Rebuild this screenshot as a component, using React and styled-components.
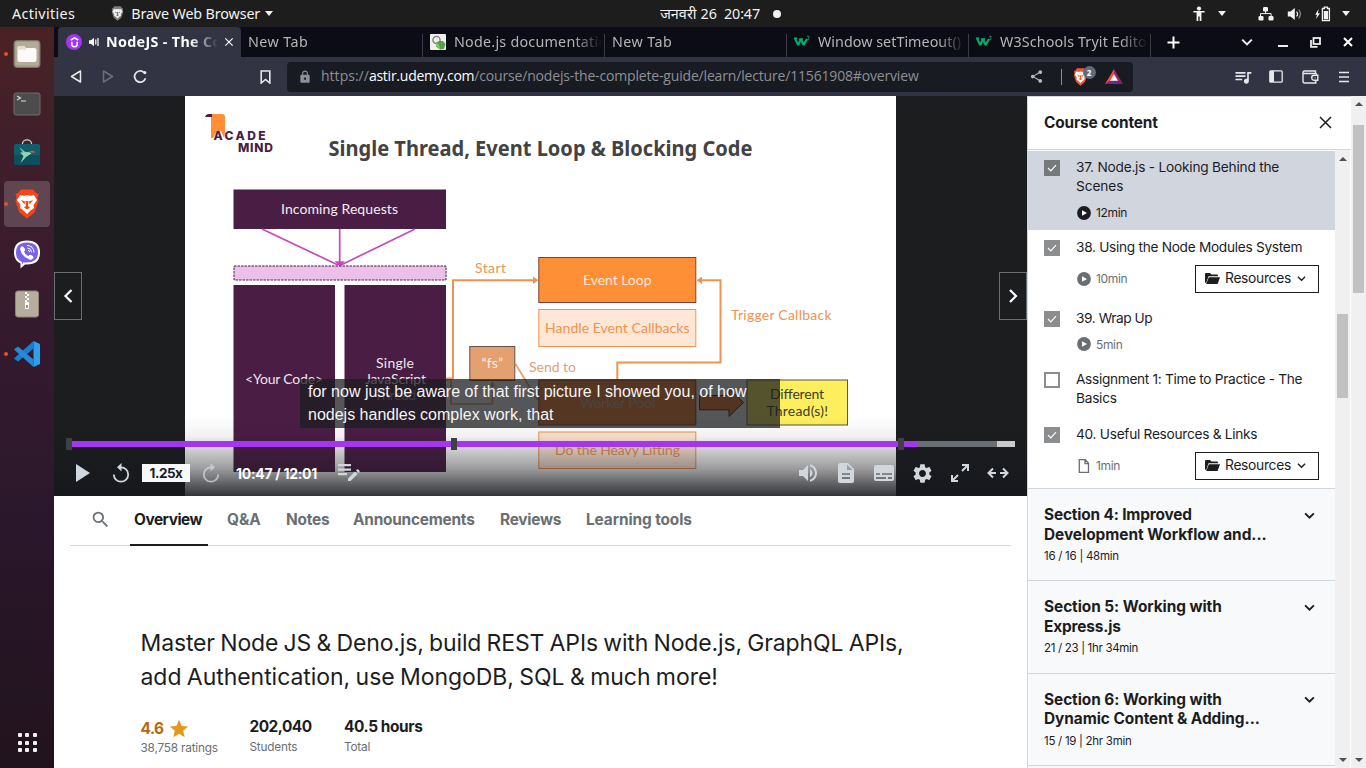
import React from 'react';
import styled, { createGlobalStyle, css } from 'styled-components';
import {
  MdVolumeUp, MdDescription, MdSubtitles, MdSettings, MdSearch, MdStar,
  MdQueueMusic, MdShare, MdLock, MdClose,
} from 'react-icons/md';

const UI = '"Noto Sans", "Open Sans", sans-serif';
const COURSE = 'Inter, "Liberation Sans", sans-serif';

const GlobalStyle = createGlobalStyle`
  * { box-sizing: border-box; }
  body { margin: 0; overflow: hidden; font-family: ${COURSE}; color: #1c1d1f; }
  svg { display: block; flex: none; }
`;

/* ---------- shared ---------- */

const Screen = styled.div`
  width: 1366px;
  height: 768px;
  display: flex;
  flex-direction: column;
  background: #fff;
`;

const Text = styled.span`
  display: block;
  white-space: pre;
  letter-spacing: ${(p) => p.$ls || 0}px;
  ${(p) => p.$left && css`margin-left: ${p.$left}px;`}
  ${(p) => p.$color && css`color: ${p.$color};`}
`;

const Slot = styled.span`
  flex: none;
  width: ${(p) => p.$w}px;
  display: flex;
  align-items: center;
  justify-content: center;
  ${(p) => p.$left && css`margin-left: ${p.$left}px;`}
  ${(p) => p.$color && css`color: ${p.$color};`}
`;

const Caret = styled.i`
  flex: none;
  border: 4.5px solid transparent;
  border-top: 5px solid #f2f2f2;
  border-bottom: 0;
  margin-left: ${(p) => p.$left}px;
`;

const Chevron = ({ size = 10, width = 2 }) => (
  <svg width={size} height={size} viewBox="0 0 10 10" fill="none" stroke="currentColor" strokeWidth={width}>
    <path d="M1 3l4 4 4-4" />
  </svg>
);

const Lion = ({ w, h, shield, face }) => (
  <svg width={w} height={h} viewBox="2 0 26 30" preserveAspectRatio="none">
    <path d="M9 .5h12l3 3.500 2.500 1-1 4 1 3-4 11.500-7.500 6-7.500-6-4-11.500 1-3-1-4L6 4z" fill={shield} />
    <path d="M8 6l4 .7L15 6l3 .7L22 6l3 5-3.500 5 .5 3-3.500 2.500L15 25l-3.500-3.500L8 19l.5-3L5 11z" fill={face} />
    <path d="M9 11l4 1.500-.5 3zM21 11l-4 1.500.5 3zM13.500 12h3l-.5 5 2 1.500-3 2-3-2 2-1.500z" fill={shield} />
  </svg>
);

/* ---------- system bar ---------- */

const SystemBar = styled.header`
  flex: none;
  height: 27px;
  background: #1d1d1d;
  color: #f2f2f2;
  display: flex;
  align-items: center;
  font: 14.3px/27px ${UI};
`;

const ClockDot = styled.i`
  width: 8px;
  height: 8px;
  border-radius: 50%;
  background: #f2f2f2;
  margin-left: 13px;
`;

function TopBar() {
  return (
    <SystemBar>
      <Text $left={12} $ls={0.37}>Activities</Text>
      <Slot $w={14} $left={35}><Lion w={13} h={15} shield="#7d7d7d" face="#f4f4f4" /></Slot>
      <Text $left={7} $ls={-0.12}>Brave Web Browser</Text>
      <Caret $left={5} />
      <Text $left={387} $ls={0.1}>जनवरी 26</Text>
      <Text $left={7} $ls={-0.09}>20:47</Text>
      <ClockDot />
      <Slot $w={14} $left={411}>
        <svg width="14" height="16" viewBox="0 0 14 16" fill="currentColor">
          <circle cx="7" cy="2.6" r="2.1" />
          <path d="M1.4 5h11.2v1.6H9.4V15H7.7v-4.6H6.3V15H4.6V6.6H1.4z" />
        </svg>
      </Slot>
      <Caret $left={12} />
      <Slot $w={16} $left={32}>
        <svg width="16" height="14" viewBox="0 0 16 14" fill="currentColor">
          <rect x="5" y="0" width="5" height="4.4" rx="1.2" />
          <rect x="0.5" y="9" width="5" height="4.4" rx="1.2" />
          <rect x="10.5" y="9" width="5" height="4.4" rx="1.2" />
          <path d="M2.5 9.5V6.6h10.6v2.9M7.6 4v3" fill="none" stroke="currentColor" />
        </svg>
      </Slot>
      <Slot $w={16} $left={13}>
        <svg width="16" height="14" viewBox="0 0 16 14" fill="currentColor">
          <path d="M0.8 4.6h2.7L7.8 1v12L3.5 9.4H0.8z" />
          <path d="M9.6 4.5q2 2.5 0 5" fill="none" stroke="currentColor" strokeWidth="1.2" />
          <path d="M11.6 2.5q3.6 4.5 0 9" fill="none" stroke="#8d8d8d" strokeWidth="1.2" />
        </svg>
      </Slot>
      <Slot $w={16} $left={12}>
        <svg width="16" height="16" viewBox="0 0 16 16" fill="currentColor">
          <path d="M3.6 3L.2 8.800h1.800L1 13l4-5.800H3z" />
          <path d="M7.4 2.5h2V1.2h3v1.3h2v12.2h-7z" fill="none" stroke="currentColor" strokeWidth="1.3" />
          <rect x="8.8" y="5" width="4.2" height="8.4" />
        </svg>
      </Slot>
      <Caret $left={11} />
    </SystemBar>
  );
}

/* ---------- dock ---------- */

const Body = styled.div`
  flex: 1;
  min-height: 0;
  display: flex;
`;

const Dock = styled.nav`
  width: 54px;
  flex: none;
  display: flex;
  flex-direction: column;
  padding: 4px 4px 11px;
  background: linear-gradient(180deg, #4a2224 0%, #42202a 12%, #351a2e 40%, #2a172b 68%, #21131d 100%);
`;

const DockItem = styled.div`
  height: 46px;
  margin-bottom: 4px;
  border-radius: 4px;
  display: flex;
  align-items: center;
  background: ${(p) => (p.$active ? 'rgba(255,255,255,.18)' : 'none')};
  &::before {
    content: '';
    width: 4px;
    height: 4px;
    border-radius: 50%;
    background: ${(p) => (p.$running ? '#e95420' : 'transparent')};
  }
  & > svg { margin-left: 4px; }
`;

const AppsButton = styled.div`
  margin: auto 0 0 13.500px;
  display: grid;
  grid-template-columns: repeat(3, 4px);
  gap: 3.5px;
  padding-bottom: 5px;
  i { height: 4px; border-radius: 1px; background: #f2f2f2; }
`;

function Launcher() {
  return (
    <Dock>
      <DockItem $running>
        <svg width="30" height="30" viewBox="0 0 30 30">
          <rect x="2" y="1.5" width="26" height="27" rx="3" fill="#a19886" stroke="#7c7566" />
          <rect x="3.5" y="3" width="23" height="23.5" rx="2" fill="#b4ab99" />
          <path d="M5.5 9q0-2 2-2H12l2 2h8.5q2 0 2 2v10q0 2-2 2h-15q-2 0-2-2z" fill="#fbfaf8" />
          <path d="M5.5 9q0-2 2-2H12l2 2v1.5H5.5z" fill="#e3ded4" />
        </svg>
      </DockItem>
      <DockItem>
        <svg width="30" height="30" viewBox="0 0 30 30">
          <rect x="2" y="4" width="26" height="22" rx="2" fill="#4c4c4c" stroke="#6d6d6d" />
          <path d="M5 7l3.5 2L5 11M9 12h5" stroke="#ddd" strokeWidth="1.2" fill="none" />
        </svg>
      </DockItem>
      <DockItem>
        <svg width="30" height="30" viewBox="0 0 30 30">
          <path d="M10.500 6V4.700a4.500 3.800 0 019 0V6" fill="none" stroke="#cfcfcf" strokeWidth="1.300" />
          <rect x="2" y="5" width="26" height="21" rx="2" fill="#125d6c" />
          <path d="M2 16h26v8q0 2-2 2H4q-2 0-2-2z" fill="#0d4f5d" />
          <path d="M7 8l9.500 7.500-3 1.500z" fill="#7fd0a6" />
          <path d="M8 13.500l9-.5 2.500 1.500L14 18l-5.500 6 3-7z" fill="#8fd6b2" />
          <path d="M17 12.500l3-.800q2.500-.3 3 2l-4-.2z" fill="#e2572e" />
        </svg>
      </DockItem>
      <DockItem $active $running>
        <Slot $w={30} $left={4}><Lion w={26} h={30} shield="#fb4316" face="#fff" /></Slot>
      </DockItem>
      <DockItem>
        <svg width="30" height="30" viewBox="0 0 30 30">
          <path d="M15 1.500q13 0 13 12t-13 12q-1 0-2 0L8.500 29.500V24.500Q2 21.500 2 13.500q0-12 13-12z" fill="#fff" />
          <path d="M15 3.500q11 0 11 10t-11 10q-2 0-3.500-.3L10 25.500V23Q4 20.500 4 13.500q0-10 11-10z" fill="#7a62e6" />
          <path d="M9.500 7.500q1.500-.8 3.500 2.500.5 1.300-1 2.400 1 3.300 4.300 4.600 1.500-2 3-1 3 1.500 2 3-1.500 2.500-3.800 1.500Q9.500 17.500 8 10q0-1.500 1.500-2.500z" fill="#fff" />
          <path d="M15 6.500q6.500 0 7 7M15.500 9q4 .2 4 4.300M16 11.300q1.500 0 1.600 1.800" fill="none" stroke="#fff" />
        </svg>
      </DockItem>
      <DockItem>
        <svg width="30" height="30" viewBox="0 0 30 30">
          <rect x="3.500" y="2" width="23" height="26" rx="2.500" fill="#b6ad9c" stroke="#8f8879" />
          <path d="M13 3h2v2h-2zM15 5h2v2h-2zM13 7h2v2h-2zM15 9h2v2h-2zM13 11h2v2h-2z" fill="#fff" />
          <rect x="13" y="13" width="4" height="7" rx="1" fill="#fff" />
          <rect x="14" y="16" width="2" height="3" fill="#9d9484" />
        </svg>
      </DockItem>
      <DockItem $running>
        <svg width="30" height="30" viewBox="0 0 30 30">
          <path d="M21.500 2L28 5v20l-6.500 3z" fill="#2f9ff0" />
          <path d="M21.500 2v7.500L6 22.500 2 19.500z" fill="#1b7fd0" />
          <path d="M2 10.500l4-3 15.500 13V28z" fill="#2489db" />
        </svg>
      </DockItem>
      <AppsButton>{Array.from({ length: 9 }, (_, i) => <i key={i} />)}</AppsButton>
    </Dock>
  );
}

/* ---------- browser chrome ---------- */

const Browser = styled.div`
  flex: 1;
  min-width: 0;
  display: flex;
  flex-direction: column;
`;

const TabStrip = styled.div`
  height: 30px;
  flex: none;
  padding-left: 4px;
  background: #0c0c16;
  display: flex;
  align-items: center;
  color: #f0f0f2;
`;

const BrowserTab = styled.div`
  width: ${(p) => (p.$active ? 183 : 182)}px;
  height: 30px;
  flex: none;
  display: flex;
  align-items: center;
  padding-left: ${(p) => (p.$active ? 8 : 7)}px;
  font: ${(p) => (p.$active ? 700 : 400)} 14.3px/30px ${UI};
  color: ${(p) => (p.$active ? '#fff' : '#b4b4b8')};
  background: ${(p) => (p.$active ? '#323443' : 'linear-gradient(#3b3c44, #3b3c44) right bottom / 1px 23px no-repeat')};
  border-radius: ${(p) => (p.$active ? '4px 4px 0 0' : 0)};
`;

const TabTitle = styled(Text)`
  overflow: hidden;
  width: ${(p) => p.$w}px;
  margin-left: ${(p) => p.$gap || 0}px;
  mask-image: linear-gradient(90deg, #000 ${(p) => p.$w - 28}px, transparent ${(p) => p.$w}px);
`;

const UdemyIcon = styled.span`
  width: 16px;
  height: 16px;
  border-radius: 50%;
  background: #a435f0;
  display: grid;
  place-items: center;
`;

const NodeDocIcon = () => (
  <svg width="16" height="16" viewBox="0 0 16 16">
    <rect width="16" height="16" rx="1" fill="#f0f0ee" />
    <circle cx="6.500" cy="6" r="3.600" fill="none" stroke="#7b7b78" strokeWidth="1.300" />
    <path d="M6 8.500l3-1.500h4l2.500 3-1.500 5-4 .5L6 12.500z" fill="#55a24a" />
    <path d="M6 8.500l3 2 1 5L6 12.500z" fill="#83c276" />
  </svg>
);

const SchoolsIcon = () => (
  <svg width="16" height="16" viewBox="0 0 16 16" fill="none" stroke="#04aa6d">
    <path d="M.8 4l3.400 7L7 5l2.500 6L13 5" strokeWidth="2.200" strokeLinejoin="bevel" />
    <path d="M0 4.200h3.200M5 5h4" strokeWidth="1.400" />
    <path d="M13 2.300h2.300l-1.200 1.500q1.500.3.900 1.500-.7.700-1.800.2" strokeWidth=".8" />
  </svg>
);

const Toolbar = styled.div`
  height: 39px;
  flex: none;
  background: #323443;
  display: flex;
  align-items: center;
  color: #e8e8ea;
`;

const AddressBar = styled.div`
  width: 846px;
  height: 30px;
  margin-left: 16px;
  padding-left: 10px;
  border-radius: 4px;
  background: #181b22;
  display: flex;
  align-items: center;
  color: #8e9095;
  font: 14px/28px "Open Sans", ${UI};
`;

const UrlText = styled(Text)`
  height: 30px;
`;

const BarDivider = styled.i`
  width: 1px;
  height: 16px;
  background: #8e9095;
  margin-left: 17px;
`;

const Shield = styled.span`
  position: relative;
  margin-left: 11px;
  b {
    position: absolute;
    left: 10px;
    top: -2px;
    width: 13px;
    height: 13px;
    border-radius: 50%;
    background: #62697a;
    color: #fff;
    font: 700 8px/13px ${UI};
    text-align: center;
  }
`;

const TABS = [
  { title: 'New Tab', ls: 0.43 },
  { title: 'Node.js documentation', ls: 0.24, icon: <NodeDocIcon /> },
  { title: 'New Tab', ls: 0.43 },
  { title: 'Window setTimeout() M', ls: 0.04, icon: <SchoolsIcon /> },
  { title: 'W3Schools Tryit Editor', ls: 0.14, icon: <SchoolsIcon /> },
];

function Chrome() {
  return (
    <>
      <TabStrip>
        <BrowserTab $active>
          <UdemyIcon>
            <svg width="9" height="11" viewBox="0 0 9 11" fill="none" stroke="#fff" strokeWidth="1.500">
              <path d="M.8 3l3.700-2.200L8.200 3M1.800 4.700V7.200q0 2.500 2.700 2.500t2.700-2.500V4.700" />
            </svg>
          </UdemyIcon>
          <Slot $w={11} $left={7}>
            <svg width="11" height="10" viewBox="0 0 11 10" fill="#fff">
              <path d="M0 3.300h2L5 .8v8.400L2 6.700H0z" /><path d="M6.800 2.500v5M9 1v8" stroke="#fff" strokeWidth="1.200" />
            </svg>
          </Slot>
          <TabTitle $w={112} $gap={6} $ls={0.34}>NodeJS - The Co</TabTitle>
          <Slot $w={10} $left={6}><MdClose size={14} /></Slot>
        </BrowserTab>
        {TABS.map((t, i) => (
          <BrowserTab key={i}>
            {t.icon}
            <TabTitle $w={t.icon ? 148 : 166} $gap={t.icon ? 8 : 0} $ls={t.ls}>{t.title}</TabTitle>
          </BrowserTab>
        ))}
        <Slot $w={14} $left={15}>
          <svg width="13" height="13"><path d="M6.500 .5v12M.5 6.500h12" stroke="#fff" strokeWidth="2" /></svg>
        </Slot>
        <Slot $w={12} $left={61}><Chevron size={12} width={1.700} /></Slot>
        <Slot $w={12} $left={24}>
          <svg width="10" height="12"><path d="M0 10h10" stroke="#eee" strokeWidth="2" /></svg>
        </Slot>
        <Slot $w={12} $left={20}>
          <svg width="11" height="11" fill="none" stroke="#eee" strokeWidth="1.800">
            <rect x="3.500" y="1" width="6.500" height="6" /><path d="M1 3v6.800h6.500" />
          </svg>
        </Slot>
        <Slot $w={12} $left={21}>
          <svg width="10" height="10"><path d="M1 1l8 8M9 1l-8 8" stroke="#fff" strokeWidth="2" /></svg>
        </Slot>
      </TabStrip>
      <Toolbar>
        <Slot $w={14} $left={15}>
          <svg width="12" height="13" fill="none" stroke="#e8e8ea" strokeWidth="1.500" strokeLinejoin="round"><path d="M10.500 1v11L1.500 6.500z" /></svg>
        </Slot>
        <Slot $w={14} $left={18}>
          <svg width="12" height="13" fill="none" stroke="#6c6e7a" strokeWidth="1.500" strokeLinejoin="round"><path d="M1.500 1v11L10.500 6.500z" /></svg>
        </Slot>
        <Slot $w={16} $left={17}>
          <svg width="15" height="15" fill="none" stroke="#e8e8ea" strokeWidth="1.700">
            <path d="M12.500 9.300A5.600 5.600 0 1110.800 3.300" /><circle cx="11.800" cy="3.600" r="1.600" fill="#e8e8ea" stroke="none" />
          </svg>
        </Slot>
        <Slot $w={12} $left={111}>
          <svg width="11" height="14" fill="none" stroke="#e8e8ea" strokeWidth="1.600"><path d="M1.200 1h8.600v12L5.500 9.500 1.200 13z" /></svg>
        </Slot>
        <AddressBar>
          <Slot $w={16}><MdLock size={14} /></Slot>
          <UrlText $left={8} $ls={0.02}>https://</UrlText>
          <UrlText $color="#fff" $ls={-0.25}>astir.udemy.com</UrlText>
          <UrlText $ls={-0.17}>/course/nodejs-the-complete-guide/learn/lecture/11561908#overview</UrlText>
          <Slot $w={14} $left={111} $color="#b9bbc0"><MdShare size={15} /></Slot>
          <BarDivider />
          <Shield>
            <Lion w={15} h={18} shield="#fb542b" face="#fff" />
            <b>2</b>
          </Shield>
          <Slot $w={18} $left={17}>
            <svg width="18" height="15">
              <path d="M9 0L0 15l9-5z" fill="#ff4724" /><path d="M9 0l9 15-9-5z" fill="#9e1f63" /><path d="M0 15l9-5 9 5z" fill="#662d91" />
              <path d="M9 5l4 6.700H5z" fill="#fff" />
            </svg>
          </Slot>
        </AddressBar>
        <Slot $w={18} $left={101}><MdQueueMusic size={20} /></Slot>
        <Slot $w={16} $left={16}>
          <svg width="14" height="13"><rect x=".8" y=".8" width="12.400" height="11.400" rx="1" fill="none" stroke="#e8e8ea" strokeWidth="1.300" /><path d="M1 1h4v11H1z" fill="#e8e8ea" /></svg>
        </Slot>
        <Slot $w={18} $left={17}>
          <svg width="17" height="14" fill="none" stroke="#e8e8ea" strokeWidth="1.400">
            <path d="M13.500 3.500V1H2.500Q1 1 1 2.500v8.700Q1 13 2.800 13h11V11M1.500 3.500h12.200q1 0 1 1.200" />
            <path d="M15.800 5.300h-3.600a2.500 2.500 0 000 5h3.600zM12.800 7.800h.6" />
          </svg>
        </Slot>
        <Slot $w={12} $left={19}>
          <svg width="10" height="12"><path d="M0 1.500h10M0 6h10M0 10.500h10" stroke="#e8e8ea" strokeWidth="1.600" /></svg>
        </Slot>
      </Toolbar>
    </>
  );
}

/* ---------- video ---------- */

const Page = styled.div`
  flex: 1;
  min-height: 0;
  display: flex;
`;

const Main = styled.main`
  width: 973px;
  flex: none;
  display: flex;
  flex-direction: column;
`;

const Player = styled.div`
  position: relative;
  height: 400px;
  flex: none;
  background: #1c1d1f;
  display: flex;
  align-items: center;
  padding-left: 131px;
`;

const SlideText = styled.text`
  font-family: Lato, sans-serif;
  font-size: 14px;
`;

const LogoText = styled.text`
  font-family: Inter, sans-serif;
  font-size: 12px;
  font-weight: 800;
`;

const Label = ({ x, y, w, fill, children }) => (
  <SlideText x={x} y={y} textLength={w} fill={fill}>{children}</SlideText>
);

function Slide() {
  const plum = '#4a1d45';
  const orange = '#ee9450';
  return (
    <svg width="711" height="400" viewBox="185 96 711 400">
      <rect x="185" y="96" width="711" height="400" fill="#fff" />
      <path d="M211 114h11q3 0 3 3v16l-1 5-3-7h-4l-4 7h-2z" fill="#ff8f36" />
      <path d="M205 117q1-3 4-3h3v3z" fill={plum} />
      <LogoText x="213.500" y="139.700" textLength="52" fill={plum}>ACADE</LogoText>
      <LogoText x="238" y="152.200" textLength="35" fill={plum}>MIND</LogoText>
      <text x="328.500" y="155.500" textLength="424" fill="#434343" fontSize="20.500" fontWeight="700" fontFamily="Noto Sans, sans-serif" lengthAdjust="spacingAndGlyphs">Single Thread, Event Loop &amp; Blocking Code</text>

      <rect x="233.500" y="189.500" width="212.500" height="39.500" fill={plum} />
      <Label x="281" y="213.800" w="117" fill="#f4eef3">Incoming Requests</Label>
      <g stroke="#c44bb8" strokeWidth="1.700" fill="#c44bb8">
        <path d="M262 229l76 36M339.700 229v36M415 229l-74 36" />
        <path d="M336.500 262l3.200 3.500 3.200-3.500z" />
      </g>
      <rect x="234" y="266" width="212" height="14" fill="#ecc0e8" stroke={plum} strokeDasharray="2.500 1" />
      <rect x="233.500" y="285" width="101.500" height="187" fill={plum} />
      <rect x="344.500" y="285" width="101.500" height="187" fill={plum} />
      <Label x="245" y="383.500" w="78" fill="#eee6ed">&lt;Your Code&gt;</Label>
      <Label x="376" y="367.500" w="38" fill="#eee6ed">Single</Label>
      <Label x="365" y="383.500" w="61" fill="#eee6ed">JavaScript</Label>
      <Label x="374" y="399.500" w="42" fill="#a995a6">Thread</Label>

      <g fill="none" stroke={orange} strokeWidth="2">
        <path d="M446 378.500h7V280.300h82" />
        <path d="M617.300 380v-17.500h103.200V280.300H700" />
        <path d="M515.500 364l22 36M446 379.500h5v24.500h41.500v-20" stroke="#e2a075" strokeWidth="1.700" />
      </g>
      <path d="M533 276.500l5.500 3.800-5.500 3.800zM702 276.500l-5.500 3.800 5.500 3.800z" fill={orange} />
      <path d="M489.500 386l3-5 3 5z" fill="#e2a075" />
      <Label x="475" y="272.900" w="31" fill={orange}>Start</Label>
      <Label x="731" y="320" w="100.500" fill={orange}>Trigger Callback</Label>
      <Label x="529" y="372.300" w="47" fill="#dfa07a">Send to</Label>

      <rect x="538.800" y="257.500" width="157" height="45" fill="#ff8f36" stroke="#7c4038" />
      <Label x="583" y="285" w="68.500" fill="#fbe9dc">Event Loop</Label>
      <rect x="538.800" y="309.500" width="157" height="37" fill="#ffe6d5" stroke={orange} />
      <Label x="545" y="332.500" w="144.500" fill={orange}>Handle Event Callbacks</Label>
      <rect x="469.800" y="346.500" width="45" height="34" fill="#e5a070" stroke="#63504a" />
      <Label x="481.500" y="367.500" w="21.500" fill="#fbeee6">“fs”</Label>
      <rect x="538.800" y="380" width="157" height="45" fill="#ff8030" stroke="#703020" />
      <Label x="580" y="407.500" w="75" fill="#d0b8a4">Worker Pool</Label>
      <path d="M699.500 395.500H729v-7l14.500 14-14.500 14v-6.700h-29.500z" fill="#f57a2c" stroke="#301818" />
      <rect x="747" y="380" width="100.500" height="45" fill="#fdee5d" stroke="#5c5638" />
      <Label x="770" y="399.300" w="54" fill="#3c3c30">Different</Label>
      <Label x="766.500" y="415.600" w="61.500" fill="#3c3c30">Thread(s)!</Label>
      <rect x="538.800" y="432" width="157" height="36.500" fill="#ffe6d5" stroke={orange} />
      <Label x="555" y="455" w="125" fill={orange}>Do the Heavy Lifting</Label>
    </svg>
  );
}

const Caption = styled.div`
  position: absolute;
  left: 246px;
  top: 283px;
  width: 480px;
  height: 49px;
  padding: 1px 8px;
  background: rgba(28, 29, 31, .75);
  color: #f4f4f6;
  font: 16px/23px "Liberation Sans", Arial, sans-serif;
  white-space: pre;
`;

const StepButton = styled.div`
  position: absolute;
  top: 176px;
  ${(p) => p.$side}: 0;
  width: 28px;
  height: 48px;
  border: 1px solid #6a6f73;
  background: #1c1d1f;
  display: grid;
  place-items: center;
`;

const Controls = styled.div`
  position: absolute;
  inset: auto 0 0 0;
  height: 80px;
  padding: 22px 12px 0;
  background: linear-gradient(180deg, rgba(22, 23, 28, 0), rgba(22, 23, 28, .06) 25%, rgba(22, 23, 28, .42) 65%, rgba(22, 23, 28, .88));
  color: #d1d7dc;
`;

const Progress = styled.div`
  height: 12px;
  display: flex;
  align-items: center;
`;

const Track = styled.i`
  width: ${(p) => p.$w}px;
  height: ${(p) => (p.$marker ? 12 : 6)}px;
  background: ${(p) => p.$c};
`;

const ButtonRow = styled.div`
  height: 24px;
  margin-top: 11px;
  display: flex;
  align-items: center;
`;

const SpeedBadge = styled.span`
  width: 48px;
  height: 18px;
  margin-left: 12px;
  background: #f7f9fa;
  color: #1c1d1f;
  font-weight: 700;
  font-size: 13.500px;
  line-height: 18px;
  letter-spacing: -0.5px;
  text-align: center;
`;

const TimeText = styled(Text)`
  width: 82px;
  color: #fff;
  font-weight: 700;
  font-size: 14px;
  letter-spacing: -0.3px;
`;

const Replay = ({ flip }) => (
  <svg width="18" height="20" viewBox="0 0 18 20" transform={flip ? 'scale(-1 1)' : undefined} opacity={flip ? 0.75 : 1}>
    <path d="M1.800 11.500a7.200 7.200 0 107.200-7.200" fill="none" stroke="currentColor" strokeWidth="1.800" />
    <path d="M9.500 0v8.600L5 4.300z" fill="currentColor" />
  </svg>
);

function Video() {
  return (
    <Player>
      <Slide />
      <StepButton $side="left">
        <svg width="10" height="16" fill="none" stroke="#fff" strokeWidth="2.200"><path d="M8.500 2l-6 6 6 6" /></svg>
      </StepButton>
      <StepButton $side="right">
        <svg width="10" height="16" fill="none" stroke="#fff" strokeWidth="2.200"><path d="M2 2l6 6-6 6" /></svg>
      </StepButton>
      <Controls>
        <Progress>
          <Track $marker $w={6} $c="#3e4143" />
          <Track $w={379} $c="#a435f0" />
          <Track $marker $w={6} $c="#3e4143" />
          <Track $w={441} $c="#a435f0" />
          <Track $marker $w={6} $c="#3e4143" />
          <Track $w={13} $c="#a435f0" />
          <Track $w={80} $c="#6a6f73" />
          <Track $w={18} $c="#c9c9c9" />
        </Progress>
        <ButtonRow>
          <Slot $w={14} $left={10}><svg width="14" height="18"><path d="M0 0l14 9-14 9z" fill="currentColor" /></svg></Slot>
          <Slot $w={18} $left={22}><Replay /></Slot>
          <SpeedBadge>1.25x</SpeedBadge>
          <Slot $w={18} $left={12}><Replay flip /></Slot>
          <TimeText $left={16}>10:47 / 12:01</TimeText>
          <Slot $w={22} $left={20}>
            <svg width="22" height="18" fill="currentColor">
              <path d="M0 0h13v2.200H0zM0 4.500h13v2.200H0zM0 9h9v2.200H0zM10 14.500l7-7 2.500 2.500-7 7H10zM18 6.500l1-1q.7-.5 1.300 0l1.200 1.200q.5.600 0 1.300l-1 1z" />
            </svg>
          </Slot>
          <Slot $w={24} $left={436}><MdVolumeUp size={24} /></Slot>
          <Slot $w={24} $left={14}><MdDescription size={24} /></Slot>
          <Slot $w={24} $left={14}><MdSubtitles size={24} /></Slot>
          <Slot $w={24} $left={14}><MdSettings size={23} /></Slot>
          <Slot $w={20} $left={16}>
            <svg width="18" height="18" fill="none" stroke="currentColor" strokeWidth="2">
              <path d="M11 1h6v6M17 1l-6 6M7 17H1v-6M1 17l6-6" />
            </svg>
          </Slot>
          <Slot $w={22} $left={17}>
            <svg width="22" height="12" fill="none" stroke="currentColor" strokeWidth="2">
              <path d="M6 1.500L1.500 6 6 10.500M2 6h7M16 1.500L20.500 6 16 10.500M20 6h-7" />
            </svg>
          </Slot>
        </ButtonRow>
      </Controls>
      <Caption>{'for now just be aware of that first picture I showed you, of how\nnodejs handles complex work, that'}</Caption>
    </Player>
  );
}

/* ---------- overview ---------- */

const Tabs = styled.div`
  height: 50px;
  margin: 0 16px;
  border-bottom: 1px solid #d1d7dc;
  display: flex;
  flex: none;
  color: #6a6f73;
  font-size: 15.400px;
  font-weight: 700;
`;

const SearchTab = styled.div`
  width: 60px;
  padding: 13px 0 0 19.500px;
`;

const CourseTab = styled.div`
  height: 50px;
  width: ${(p) => p.$w}px;
  padding: 0 4px;
  margin-right: ${(p) => p.$gap}px;
  line-height: 48px;
  color: ${(p) => (p.$active ? '#1c1d1f' : 'inherit')};
  border-bottom: ${(p) => (p.$active ? '2px solid #1c1d1f' : '0')};
`;

const Overview = styled.section`
  padding: 79.500px 0 0 86.500px;
`;

const Headline = styled.h1`
  margin: 0;
  font-weight: 400;
  font-size: 23px;
  line-height: 34px;
  word-spacing: -1px;
`;

const Stats = styled.div`
  display: flex;
  margin-top: 23px;
`;

const Stat = styled.div`
  width: ${(p) => p.$w}px;
  font-weight: 700;
  font-size: 15.400px;
  line-height: 20px;
  padding-top: ${(p) => (p.$rating ? 1.500 : 0)}px;
  color: ${(p) => (p.$rating ? '#b4690e' : '#1c1d1f')};
  div { display: flex; align-items: center; height: 21px; gap: 4px; }
  small {
    display: block;
    font-weight: 400;
    font-size: 11.800px;
    line-height: 18px;
    letter-spacing: -0.2px;
    color: #6a6f73;
  }
`;

const COURSE_TABS = [
  ['Overview', 78, 15, -0.46, true],
  ['Q&A', 43, 16, -0.05],
  ['Notes', 51, 16, -0.22],
  ['Announcements', 131, 16, -0.22],
  ['Reviews', 69, 17, -0.23],
  ['Learning tools', 113, 0, -0.1],
];

function Content() {
  return (
    <>
      <Tabs>
        <SearchTab><MdSearch size={21} /></SearchTab>
        {COURSE_TABS.map(([name, w, gap, ls, active]) => (
          <CourseTab key={name} $w={w} $gap={gap} $active={active}><Text $ls={ls}>{name}</Text></CourseTab>
        ))}
      </Tabs>
      <Overview>
        <Headline>
          <Text $ls={-0.14}>Master Node JS &amp; Deno.js, build REST APIs with Node.js, GraphQL APIs,</Text>
          <Text $ls={-0.05}>add Authentication, use MongoDB, SQL &amp; much more!</Text>
        </Headline>
        <Stats>
          <Stat $w={109} $rating>
            <div><Text $ls={-0.5}>4.6</Text><MdStar size={22} color="#e59819" /></div>
            <small>38,758 ratings</small>
          </Stat>
          <Stat $w={94.500}><div><Text $ls={-0.5}>202,040</Text></div><small>Students</small></Stat>
          <Stat $w={100}><div><Text $ls={-0.4}>40.5 hours</Text></div><small>Total</small></Stat>
        </Stats>
      </Overview>
    </>
  );
}

/* ---------- sidebar ---------- */

const Sidebar = styled.aside`
  width: 324px;
  flex: none;
  border-left: 1px solid #d1d7dc;
  border-top: 1px solid #d1d7dc;
  display: flex;
  flex-direction: column;
`;

const SideHeader = styled.div`
  height: 53px;
  flex: none;
  border-bottom: 1px solid #d1d7dc;
  padding: 0 19px 1px 16px;
  display: flex;
  align-items: center;
  justify-content: space-between;
  font-size: 15.400px;
  line-height: 20px;
  font-weight: 700;
`;

const SideBody = styled.div`
  flex: 1;
  min-height: 0;
  display: flex;
`;

const List = styled.div`
  width: 307px;
  padding-top: 1px;
  overflow: hidden;
  background: #f7f9fa;
`;

const Lecture = styled.div`
  height: ${(p) => p.$h}px;
  padding: ${(p) => p.$top || 8}px 16px 0;
  background: ${(p) => (p.$current ? '#d1d7dc' : '#fff')};
  background: ${(p) => (p.$current ? '#d1d5de' : '#fff')};
  display: flex;
  font-size: 13.700px;
  line-height: 19.300px;
`;

const Check = styled.span`
  width: 16px;
  height: 16px;
  margin-top: 2px;
  flex: none;
  display: grid;
  place-items: center;
  background: ${(p) => (p.$on ? (p.$dark ? '#76797b' : '#8c8d8f') : '#fff')};
  border: ${(p) => (p.$on ? 0 : 2)}px solid #8c8d8f;
`;

const LectureBody = styled.div`
  flex: 1;
  padding-left: 16px;
`;

const Meta = styled.div`
  display: flex;
  align-items: center;
  height: ${(p) => (p.$button ? 28 : 20)}px;
  margin-top: ${(p) => (p.$button ? 7.500 : 6)}px;
  padding-left: 1px;
  color: ${(p) => (p.$current ? '#1c1d1f' : '#6a6f73')};
  font-size: 12px;
`;

const ResourcesButton = styled.span`
  width: 124px;
  height: 28px;
  margin-left: auto;
  border: 1px solid #1c1d1f;
  background: #fff;
  color: #1c1d1f;
  display: flex;
  align-items: center;
  padding-left: 9px;
  font-size: 13.800px;
`;

const Section = styled.div`
  height: 92.300px;
  border-top: 1px solid #d1d7dc;
  padding: 16px 20.500px 0 16px;
  display: flex;
  justify-content: space-between;
  font-size: 15.400px;
  line-height: 19.500px;
  font-weight: 700;
  small {
    display: block;
    margin-top: 4px;
    font-size: 11.500px;
    line-height: 16.800px;
    font-weight: 400;
  }
  & > svg { margin-top: 4.500px; }
`;

const Scrollbar = styled.div`
  width: ${(p) => p.$w}px;
  flex: none;
  background: #f0f0f0;
  border-right: ${(p) => p.$w - 15}px solid #fff;
  display: flex;
  flex-direction: column;
  align-items: center;
`;

const Arrow = styled.i`
  border: 4px solid transparent;
  ${(p) => (p.$down
    ? css`border-top: 4px solid #505050; border-bottom: 0; margin: auto 0 6px;`
    : css`border-bottom: 4px solid #505050; border-top: 0; margin: ${p.$top}px 0 0;`)}
`;

const Thumb = styled.i`
  width: 11px;
  height: ${(p) => p.$h}px;
  margin-top: ${(p) => p.$top}px;
  background: #c1c1c1;
`;

const PlayDisc = () => (
  <svg width="14" height="14"><circle cx="7" cy="7" r="6.900" fill="currentColor" /><path d="M5 4.200v5.600L10 7z" fill="#fff" /></svg>
);

const PageIcon = () => (
  <svg width="14" height="14" fill="none" stroke="currentColor" strokeWidth="1.300"><path d="M2.300.7h6l3.200 3.500v9.100H2.300zM8 .7v4h3.500" /></svg>
);

const FolderIcon = () => (
  <svg width="15" height="12" fill="currentColor"><path d="M0 1q0-1 1-1h4l1.500 1.500H12q1 0 1 1V3.300H3.500L1.200 10H1Q0 10 0 9z" /><path d="M3.800 4.200H15L12.600 11H1.200z" /></svg>
);

const LECTURES = [
  { lines: [['37. Node.js - Looking Behind the', -0.22], ['Scenes', -0.1]], time: '12min', current: true, on: true, h: 79, top: 7 },
  { lines: [['38. Using the Node Modules System', -0.3]], time: '10min', on: true, h: 71, button: true },
  { lines: [['39. Wrap Up', -0.43]], time: '5min', on: true, h: 61 },
  { lines: [['Assignment 1: Time to Practice - The', -0.32], ['Basics', -0.25]], h: 55 },
  { lines: [['40. Useful Resources & Links', -0.28]], time: '1min', on: true, h: 71, button: true, page: true },
];

const SECTIONS = [
  { lines: [['Section 4: Improved', -0.16], ['Development Workflow and...', -0.03]], meta: '16 / 16 | 48min', ls: -0.26 },
  { lines: [['Section 5: Working with', -0.06], ['Express.js', -0.15]], meta: '21 / 23 | 1hr 34min', ls: -0.31 },
  { lines: [['Section 6: Working with', -0.06], ['Dynamic Content & Adding...', -0.05]], meta: '15 / 19 | 2hr 3min', ls: -0.28 },
];

function CourseSidebar() {
  return (
    <Sidebar>
      <SideHeader>
        <Text $ls={-0.17}>Course content</Text>
        <svg width="13" height="13"><path d="M1 1l11 11M12 1L1 12" stroke="#1c1d1f" strokeWidth="1.500" /></svg>
      </SideHeader>
      <SideBody>
        <List>
          {LECTURES.map((l) => (
            <Lecture key={l.lines[0][0]} $h={l.h} $top={l.top} $current={l.current}>
              <Check $on={l.on} $dark={l.current}>
                {l.on && <svg width="10" height="8" fill="none" stroke="#fff" strokeWidth="1.200"><path d="M1 4l2.800 2.800L9 1.200" /></svg>}
              </Check>
              <LectureBody>
                {l.lines.map(([t, ls]) => <Text key={t} $ls={ls}>{t}</Text>)}
                {l.time && (
                  <Meta $button={l.button} $current={l.current}>
                    {l.page ? <PageIcon /> : <PlayDisc />}
                    <Text $left={5} $ls={-0.35}>{l.time}</Text>
                    {l.button && (
                      <ResourcesButton>
                        <FolderIcon /><Text $left={5} $ls={-0.3}>Resources</Text>
                        <Slot $w={8} $left={7}><Chevron size={9} width={1.500} /></Slot>
                      </ResourcesButton>
                    )}
                  </Meta>
                )}
              </LectureBody>
            </Lecture>
          ))}
          {SECTIONS.map((s) => (
            <Section key={s.meta}>
              <div>
                {s.lines.map(([t, ls]) => <Text key={t} $ls={ls}>{t}</Text>)}
                <small><Text $ls={s.ls}>{s.meta}</Text></small>
              </div>
              <Chevron size={11} width={1.700} />
            </Section>
          ))}
          <Section />
        </List>
        <Scrollbar $w={16}><Arrow $top={7} /><Thumb $top={153} $h={84} /><Arrow $down /></Scrollbar>
      </SideBody>
    </Sidebar>
  );
}

export default function App() {
  return (
    <Screen>
      <GlobalStyle />
      <TopBar />
      <Body>
        <Launcher />
        <Browser>
          <Chrome />
          <Page>
            <Main>
              <Video />
              <Content />
            </Main>
            <CourseSidebar />
            <Scrollbar $w={15}><Arrow $top={6} /><Thumb $top={19} $h={168} /><Arrow $down /></Scrollbar>
          </Page>
        </Browser>
      </Body>
    </Screen>
  );
}
